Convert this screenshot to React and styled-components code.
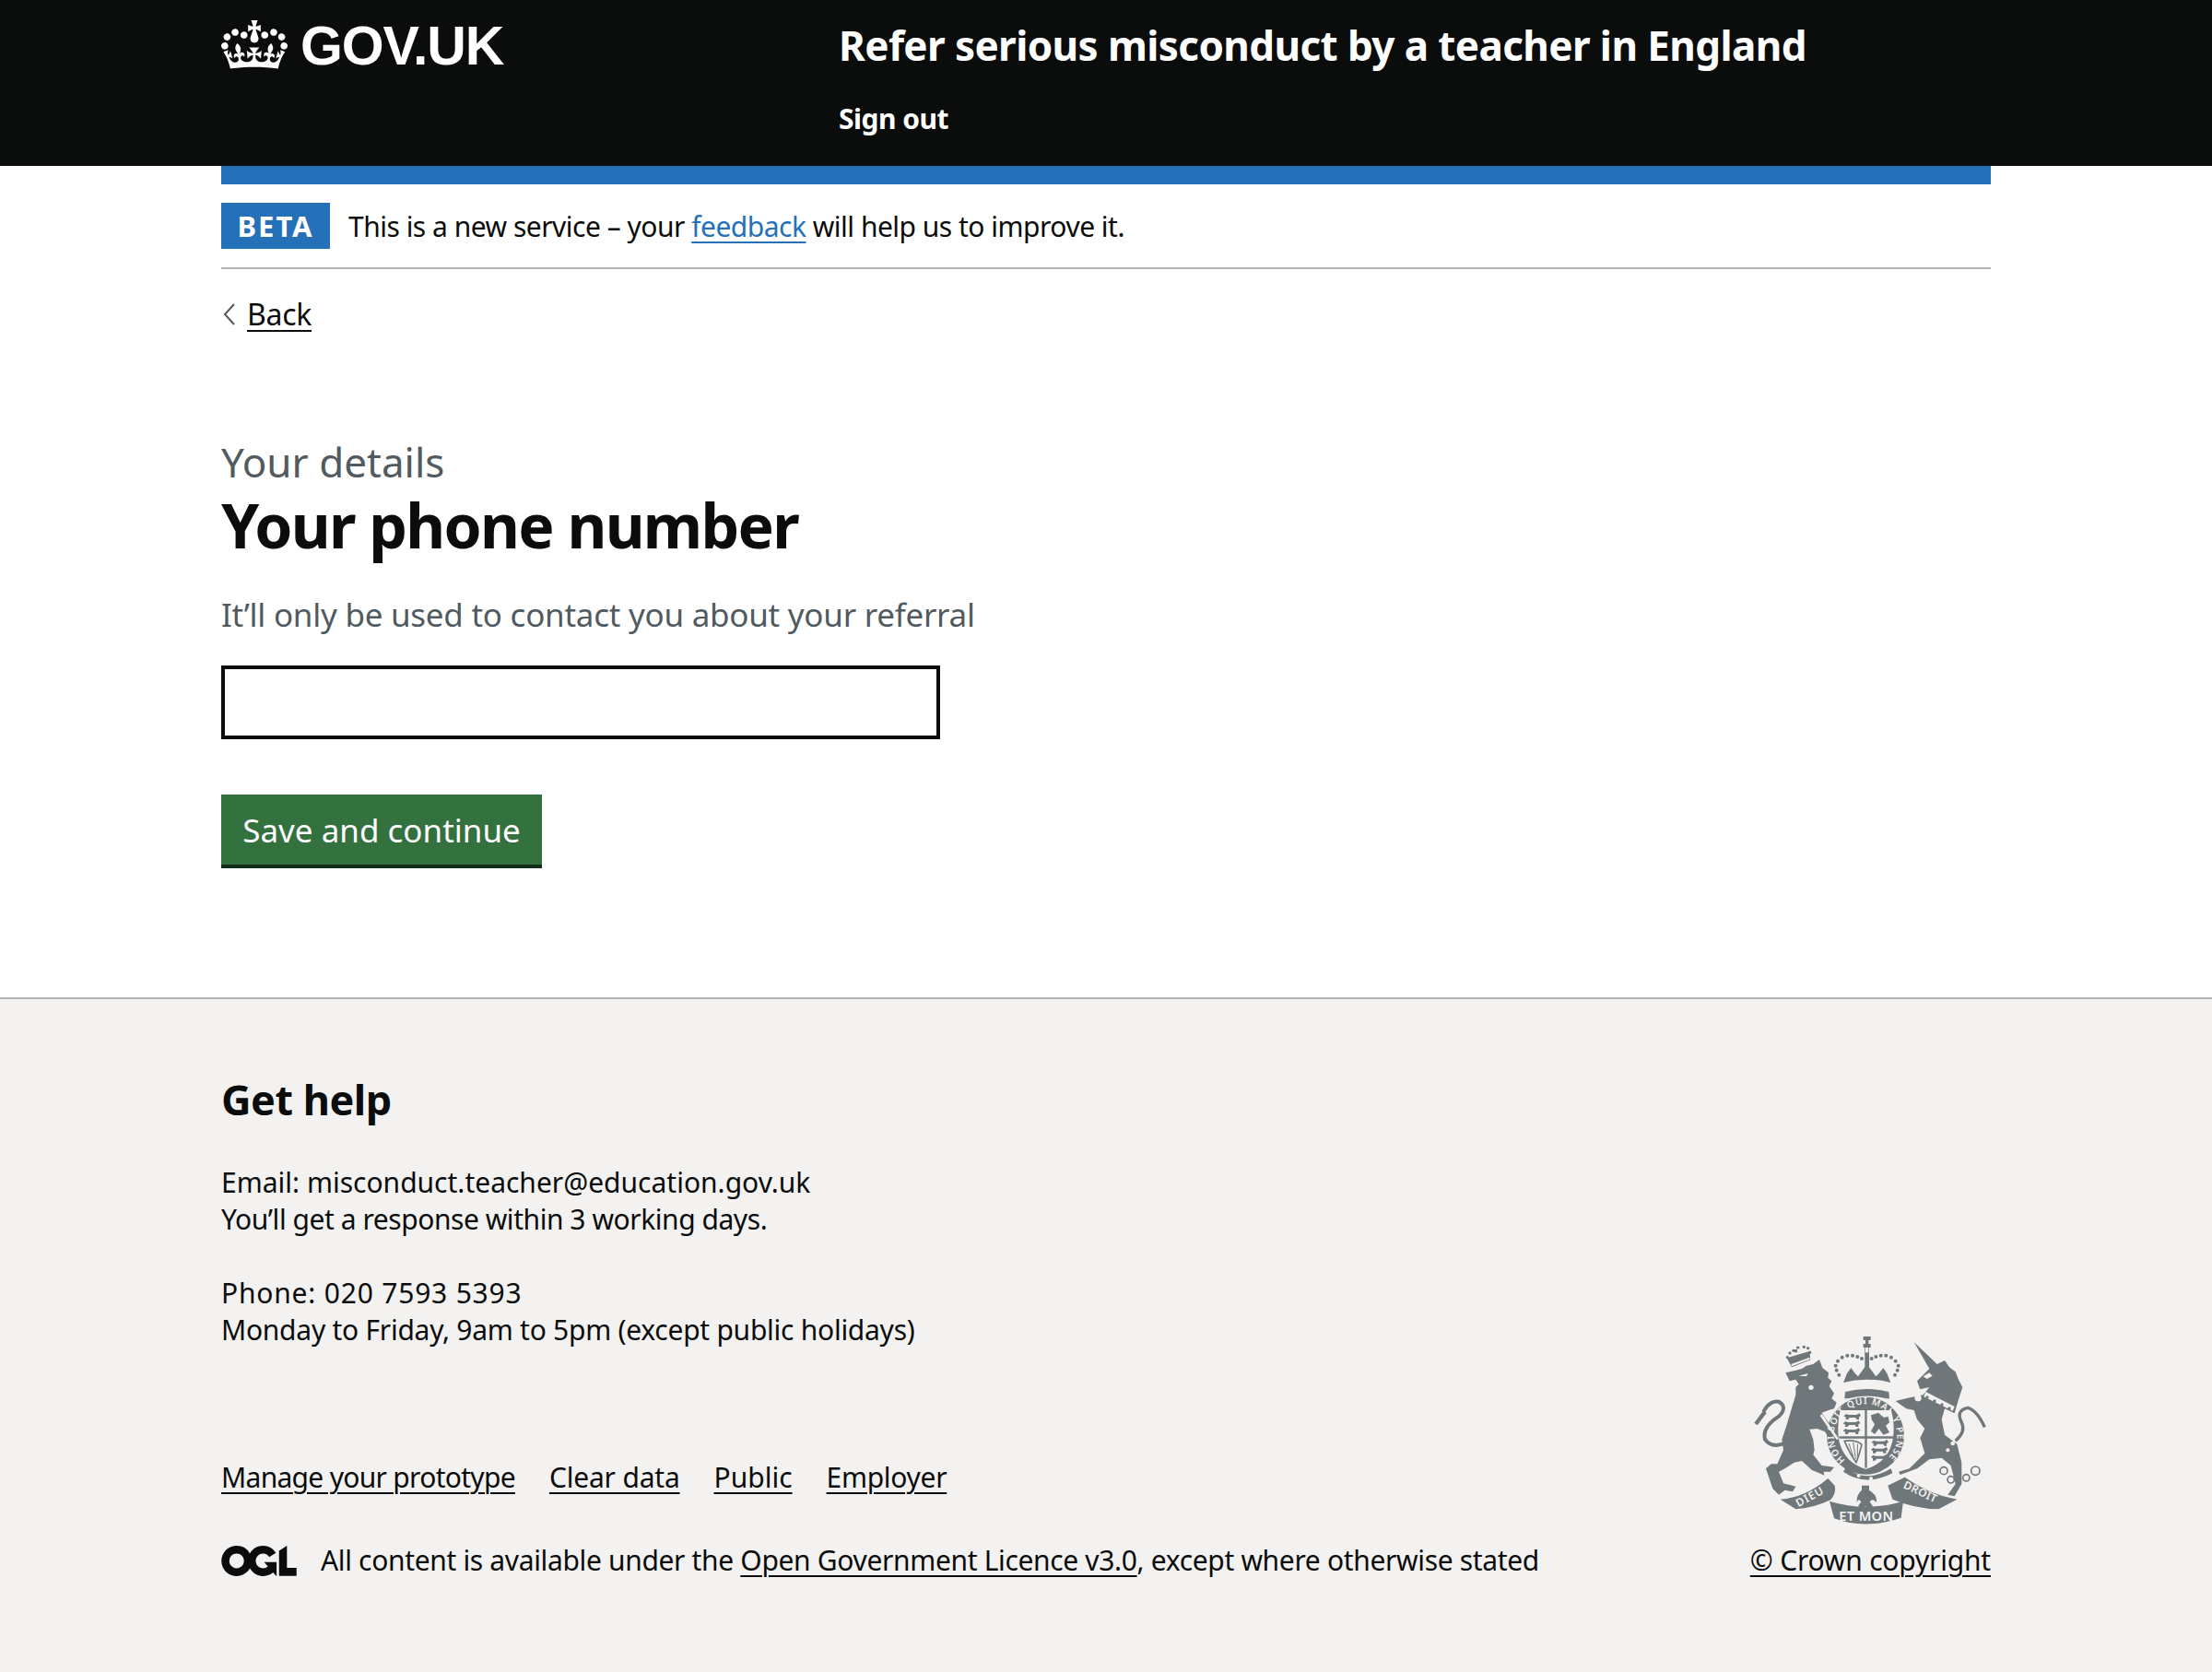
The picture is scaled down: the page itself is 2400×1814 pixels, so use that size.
import React from 'react';
import styled, { createGlobalStyle } from 'styled-components';

const FONT = '"Noto Sans", "Liberation Sans", Arial, sans-serif';
const INK = '#0b0c0c';
const GREY = '#505a5f';
const BLUE = '#2470b9';
const FOOTER_BG = '#f3f2f1';
const CREST = '#6f777b';

const GlobalStyle = createGlobalStyle`
  html, body {
    margin: 0;
    padding: 0;
    background: #fff;
    color: ${INK};
    font-family: ${FONT};
  }
`;

const Width = styled.div`
  width: 1920px;
  margin: 0 auto;
`;

const Header = styled.header`
  background: ${INK};
  height: 180px;
  color: #fff;
  overflow: hidden;
`;

const HeaderRow = styled(Width)`
  display: flex;
`;

const Logo = styled.a`
  width: 670px;
  height: 100px;
  display: flex;
  align-items: center;
  gap: 14px;
  color: #fff;
  font-family: "Liberation Sans", Arial, sans-serif;
  font-weight: 700;
  font-size: 59px;
  letter-spacing: -1.2px;
`;

const Crown = styled.svg`
  width: 72px;
  height: 53px;
  margin-bottom: 3px;
  fill: #fff;
`;

const ServiceName = styled.div`
  font-size: 44px;
  font-weight: 700;
  line-height: 98px;
  letter-spacing: -0.6px;
`;

const SignOut = styled.div`
  font-size: 30px;
  font-weight: 700;
  line-height: 62px;
  letter-spacing: -0.5px;
`;

const BlueBar = styled(Width)`
  height: 20px;
  background: ${BLUE};
`;

const PhaseBanner = styled(Width)`
  display: flex;
  align-items: center;
  gap: 20px;
  padding: 20px 0;
  border-bottom: 2px solid #b1b4b6;
  font-size: 30px;
  letter-spacing: -0.5px;
`;

const Tag = styled.strong`
  background: ${BLUE};
  color: #fff;
  height: 50px;
  width: 118px;
  display: flex;
  align-items: center;
  justify-content: center;
  font-size: 31px;
  font-weight: 700;
  letter-spacing: 2px;
`;

const Link = styled.a`
  color: ${(p) => p.$color || INK};
  letter-spacing: ${(p) => p.$spacing || 'inherit'};
  text-decoration: underline;
  text-decoration-thickness: 2px;
  text-underline-offset: 5px;
`;

const Main = styled(Width)`
  height: 790px;
  box-sizing: border-box;
  padding-top: 28px;
`;

const BackRow = styled.div`
  display: flex;
  align-items: center;
  gap: 12px;
  height: 40px;
  font-size: 32px;
  letter-spacing: -0.3px;
  margin-bottom: 111px;
`;

const Chevron = styled.svg`
  width: 14px;
  height: 24px;
  margin: 2px 0 0 2px;
`;

const Caption = styled.div`
  font-size: 44px;
  line-height: 60px;
  color: ${GREY};
`;

const Heading = styled.h1`
  margin: -2px 0 33px;
  font-size: 66px;
  line-height: 80px;
  font-weight: 700;
  letter-spacing: -1.7px;
`;

const Hint = styled.div`
  font-size: 35px;
  line-height: 50px;
  letter-spacing: -0.26px;
  color: ${GREY};
  margin-bottom: 30px;
`;

const Input = styled.input`
  display: block;
  width: 780px;
  height: 80px;
  box-sizing: border-box;
  border: 4px solid ${INK};
  border-radius: 0;
  background: #fff;
  margin-bottom: 60px;
`;

const Button = styled.button`
  display: block;
  width: 348px;
  height: 80px;
  box-sizing: border-box;
  padding: 0 0 4px;
  border: 0;
  border-radius: 0;
  background: #33713f;
  box-shadow: inset 0 -4px 0 #122d19;
  color: #fff;
  font-family: ${FONT};
  font-size: 35px;
`;

const Footer = styled.footer`
  background: ${FOOTER_BG};
  border-top: 2px solid #b1b4b6;
  height: 732px;
  box-sizing: border-box;
`;

const FooterInner = styled(Width)`
  display: flex;
  justify-content: space-between;
  align-items: flex-end;
  padding-top: 79px;
`;

const FooterMain = styled.div`
  font-size: 30px;
  line-height: 40px;
`;

const HelpTitle = styled.h2`
  margin: 0 0 40px;
  font-size: 45px;
  line-height: 60px;
  font-weight: 700;
  letter-spacing: -0.5px;
`;

const Para = styled.div`
  margin: 0 0 40px;
`;

const Line = styled.div`
  letter-spacing: ${(p) => p.$spacing || 'normal'};
`;

const MetaLinks = styled.div`
  display: flex;
  gap: 37px;
  margin-top: 120px;
`;

const LicenceRow = styled.div`
  display: flex;
  align-items: center;
  gap: 26px;
  margin-top: 50px;
  height: 40px;
  letter-spacing: -0.34px;
`;

const Ogl = styled.svg`
  width: 82px;
  height: 33px;
  fill: ${INK};
`;

const CrestColumn = styled.div`
  display: flex;
  flex-direction: column;
  align-items: flex-end;
  font-size: 30px;
  line-height: 40px;
`;

const CrestSvg = styled.svg`
  width: 300px;
  height: 240px;
  margin: 0 -20px 3px 0;
`;

const CrownIcon = () => (
  <Crown viewBox="0 0 132 97" aria-hidden="true">
    <path d="M25 30.2c3.5 1.5 7.7-.2 9.1-3.7 1.5-3.6-.2-7.8-3.9-9.2-3.6-1.4-7.6.3-9.1 3.9-1.4 3.5.3 7.5 3.9 9zM9 39.5c3.6 1.5 7.8-.2 9.2-3.7 1.5-3.6-.2-7.8-3.9-9.1-3.6-1.5-7.6.2-9.1 3.8-1.4 3.5.3 7.5 3.8 9zM4.4 57.2c3.5 1.5 7.7-.2 9.1-3.8 1.5-3.6-.2-7.7-3.9-9.1-3.5-1.5-7.6.3-9.1 3.8-1.4 3.5.3 7.6 3.9 9.1zm38.3-21.4c3.5 1.5 7.7-.2 9.1-3.8 1.5-3.6-.2-7.7-3.9-9.1-3.6-1.5-7.6.3-9.1 3.8-1.3 3.6.4 7.7 3.9 9.1zm64.4-5.6c-3.6 1.5-7.8-.2-9.1-3.7-1.5-3.6.2-7.8 3.8-9.2 3.6-1.4 7.7.3 9.2 3.9 1.3 3.5-.4 7.5-3.9 9zm15.9 9.3c-3.6 1.5-7.7-.2-9.1-3.7-1.5-3.6.2-7.8 3.7-9.1 3.6-1.5 7.7.2 9.2 3.8 1.5 3.5-.3 7.5-3.8 9zm4.7 17.7c-3.6 1.5-7.8-.2-9.2-3.8-1.5-3.6.2-7.7 3.9-9.1 3.6-1.5 7.7.3 9.2 3.8 1.3 3.5-.4 7.6-3.9 9.1zM89.3 35.8c-3.6 1.5-7.8-.2-9.2-3.8-1.4-3.6.2-7.7 3.9-9.1 3.6-1.5 7.7.3 9.2 3.8 1.4 3.6-.3 7.7-3.9 9.1zM69.7 17.7l8.9 4.7V9.3l-8.9 2.8c-.2-.3-.5-.6-.9-.9L72.4 0H59.6l3.6 11.2c-.3.3-.6.5-.9.9l-8.8-2.8v13.1l8.8-4.7c.3.3.6.7.9.9l-5 15.4v.1c-.2.8-.4 1.6-.4 2.4 0 4.1 3.1 7.5 7 8.1h.2c.3 0 .7.1 1 .1.4 0 .7 0 1-.1h.2c4-.6 7.1-4.1 7.1-8.1 0-.8-.1-1.7-.4-2.4V34l-5.1-15.4c.4-.2.7-.6 1-.9zM66 92.8c16.9 0 32.8 1.1 47.1 3.2 4-16.9 8.9-26.7 14-33.5l-9.6-3.4c1 4.9 1.1 7.2 0 10.2-1.5-1.4-3-4.3-4.2-8.7L108.6 76c2.8-2 5-3.2 7.5-3.3-4.4 9.4-10 11.9-13.6 11.2-4.3-.8-6.3-4.6-5.6-7.9 1-4.7 5.7-5.9 8-.5 4.3-8.7-3-11.4-7.6-8.8 7.1-7.2 7.9-13.5 2.1-21.1-8 6.1-8.1 12.3-4.5 20.8-4.7-5.4-12.1-2.5-9.5 6.2 3.4-5.2 7.9-2 7.2 3.1-.6 4.3-6.4 7.8-13.5 7.2-10.3-.9-10.9-8-11.2-13.8 2.5-.5 7.1 1.8 11 7.3L80.2 60c-4.1 4.4-8 5.3-12.3 5.4 1.4-4.4 8-11.6 8-11.6H55.5s6.4 7.2 7.9 11.6c-4.2-.1-8-1-12.3-5.4l1.4 16.4c3.9-5.5 8.5-7.7 10.9-7.3-.3 5.8-.9 12.8-11.1 13.8-7.2.6-12.9-2.9-13.5-7.2-.7-5 3.8-8.3 7.1-3.1 2.7-8.7-4.6-11.6-9.4-6.2 3.7-8.5 3.6-14.7-4.6-20.8-5.8 7.6-5 13.9 2.2 21.1-4.7-2.6-11.9.1-7.7 8.8 2.3-5.5 7.1-4.2 8.1.5.7 3.3-1.3 7.1-5.7 7.9-3.5.7-9-1.8-13.5-11.2 2.5.1 4.7 1.3 7.5 3.3l-4.7-15.4c-1.2 4.4-2.7 7.2-4.3 8.7-1.1-3-.9-5.3 0-10.2l-9.5 3.4c5 6.9 9.9 16.7 14 33.5 14.8-2.1 30.8-3.2 47.7-3.2z" />
  </Crown>
);

const OglLogo = () => (
  <Ogl viewBox="0 0 483.2 195.7" aria-hidden="true">
    <path d="M421.5 142.8V.1l-50.7 32.3v161.1h112.4v-50.7zm-122.3-9.6A47.12 47.12 0 0 1 221 97.8c0-26 21.1-47.1 47.1-47.1 16.7 0 31.4 8.7 39.7 21.8l42.7-27.2A97.63 97.63 0 0 0 268.1 0c-36.5 0-68.3 20.1-85.1 49.7A98 98 0 0 0 97.8 0C43.9 0 0 43.9 0 97.8s43.9 97.8 97.8 97.8c36.5 0 68.3-20.1 85.1-49.7a97.76 97.76 0 0 0 149.6 25.4l19.4 22.2h3v-87.8h-80l24.3 27.5zM97.8 145c-26 0-47.1-21.1-47.1-47.1s21.1-47.1 47.1-47.1 47.2 21 47.2 47S123.8 145 97.8 145" />
  </Ogl>
);

// coordinates are the crest's pixels at 3x, so the drawing can be read against a zoom
const crownDots = [
  [338, 170], [335, 155], [342, 140], [356, 128], [373, 122], [390, 122], [406, 126], [420, 132],
  [452, 132], [466, 126], [482, 122], [499, 122], [516, 128], [530, 140], [539, 155], [536, 170], [528, 185], [346, 185],
];
const lionCrownDots = [[178, 128], [186, 114], [198, 106], [232, 94], [245, 98], [251, 112]];
const passant = [[0, 0], [-2, 24], [-2, 48]];
const chainLinks = [[687, 497, 12], [710, 526, 11], [760, 520, 11], [790, 497, 14]];

const Passant = ({ x, y }) => (
  <g transform={`translate(${x} ${y})`}>
    {passant.map(([dx, dy]) => (
      <path key={dy} transform={`translate(${dx} ${dy})`} d="M0 6 l8 -6 l6 3 h26 l10 -5 l5 8 l-6 4 v8 h-8 l-3 -6 h-20 l-4 6 h-8 v-8 l-6 -2 z" />
    ))}
  </g>
);

const Crest = () => (
  <CrestSvg viewBox="0 0 900 720" role="img" aria-label="Royal coat of arms">
    <defs>
      <path id="garter" d="M366 462 A103 103 0 1 1 498 462" />
    </defs>
    <g fill={CREST}>
      {/* lion */}
      <path d="M172 178 L205 170 L225 165 L240 155 L262 150 L282 135 L292 162 L312 178 L310 195 L322 205 L314 222 L330 245 L322 262 L338 275 L330 295 L312 300 L290 308 L300 325 L320 350 L345 395 L335 410 L320 400 L300 370 L275 360 L250 362 L262 395 L266 430 L262 445 L290 480 L330 485 L318 500 L296 500 L298 512 L282 505 L258 495 L225 465 L200 470 L170 490 L150 500 L165 538 L205 548 L195 565 L170 560 L150 575 L130 555 L108 490 L125 475 L145 475 L165 430 L160 395 L175 350 L190 300 L205 250 L205 225 L215 215 L205 200 L185 205 Z" />
      <path d="M176 130 L250 108 L253 136 L192 160 Z" />
      <path d="M200 102 h8 l-1 -10 h10 v8 h-8 l2 12 h-10 z" />
      {/* unicorn */}
      <path d="M590 78 L665 150 L690 138 L705 160 L725 175 L735 200 L748 225 L735 265 L722 310 L690 295 L680 330 L690 380 L730 410 L745 470 L745 540 L722 580 L700 575 L725 540 L710 480 L680 455 L640 460 L600 490 L545 510 L540 500 L575 490 L625 440 L610 390 L625 360 L600 330 L590 300 L565 295 L530 270 L570 260 L620 250 L640 225 L610 232 L600 205 L640 165 Z" />
      {/* royal crown */}
      <path d="M360 210 L372 180 L385 162 L398 180 L408 190 L437 150 L466 190 L476 180 L490 162 L502 180 L514 210 Q437 190 360 210 Z" />
      <path d="M425 60 H449 V72 H442 V84 H449 V96 H425 V84 H432 V72 H425 Z" />
      <path d="M430 96 H444 V165 H430 Z" />
      <path d="M366 240 Q437 222 508 240 L510 262 L498 262 Q437 245 376 262 L364 262 Z" />
      {crownDots.map(([x, y]) => (
        <circle key={`${x}-${y}`} cx={x} cy={y} r="6" />
      ))}
      {lionCrownDots.map(([x, y]) => (
        <circle key={`${x}-${y}`} cx={x} cy={y} r="5" />
      ))}
      {/* garter ring and buckle */}
      <circle cx="432" cy="383" r="126" />
      <path d="M368 485 Q432 540 515 490 L520 505 Q432 550 360 500 Z" />
      {/* scrolls */}
      <path d="M155 590 Q235 585 310 522 L332 545 Q338 570 318 592 Q260 620 205 622 Z" />
      <path d="M315 596 Q432 632 555 596 L548 650 Q432 690 330 652 Z" />
      <path d="M505 545 L560 518 Q640 575 730 590 L670 622 Q590 620 520 590 Z" />
      {/* fleur-de-lis */}
      <path d="M420 545 H444 V560 Q470 575 468 600 Q455 585 446 598 L456 612 L440 622 L432 612 L424 622 L408 612 L418 598 Q409 585 404 600 Q402 575 420 560 Z" />
    </g>
    <g fill="none" stroke={CREST}>
      <path strokeWidth="12" d="M185 400 Q130 430 105 395 Q95 355 150 320 Q180 290 150 272 Q120 268 100 305" />
      <path strokeWidth="13" d="M105 305 L75 345" />
      <path strokeWidth="10" d="M725 400 Q760 370 745 340 Q725 300 765 292 Q795 300 820 355" />
      {chainLinks.map(([cx, cy, r]) => (
        <circle key={cx} cx={cx} cy={cy} r={r} strokeWidth="5" />
      ))}
    </g>
    <g fill={FOOTER_BG}>
      {/* shield */}
      <path d="M350 300 H516 Q530 350 520 400 Q505 470 433 492 Q362 470 346 400 Q338 350 350 300 Z" />
      {/* gaps in the beasts */}
      <circle cx="716" cy="408" r="7" />
      <circle cx="700" cy="430" r="6" />
      <circle cx="725" cy="370" r="9" />
      <circle cx="255" cy="226" r="8" />
      <path d="M215 188 L245 180 L240 190 Z" />
      <path d="M290 312 L345 392 L338 396 L284 318 Z" />
      <path d="M628 240 L722 288 L716 302 L622 256 Z" />
      <path d="M620 190 L640 178 L650 188 L632 198 Z" />
      <circle cx="603" cy="260" r="11" />
      <circle cx="593" cy="345" r="11" />
      <circle cx="410" cy="513" r="6" />
      <circle cx="450" cy="522" r="6" />
      <path d="M190 150 L250 128 L251 134 L192 157 Z" />
      <path d="M432 96 H442 V112 H432 Z" />
    </g>
    <g fill={CREST}>
      <path d="M430 298 H437 V488 H430 Z" />
      <path d="M346 385 H522 V392 H346 Z" />
      <Passant x={362} y={312} />
      <Passant x={452} y={398} />
      {/* rampant lion of the second quarter */}
      <path d="M450 316 L474 308 L492 324 L506 320 L510 340 L498 350 L510 372 L490 380 L476 360 L462 378 L450 368 L462 346 L452 330 Z" />
      {[0, 1, 2, 3].map((i) => (
        <circle key={i} cx={633 + 24 * i} cy={258 + 12 * i} r="5" />
      ))}
    </g>
    {/* harp */}
    <g fill="none" stroke={CREST} strokeWidth="5">
      <path d="M364 400 Q400 395 420 412 Q412 445 402 470 Q380 440 364 400 Z" />
      <path d="M378 408 L392 450 M392 404 L400 458 M406 410 L406 452" strokeWidth="3" />
    </g>
    <g fill={FOOTER_BG} fontFamily="Noto Sans, sans-serif" fontWeight="600">
      <text fontSize="30" textLength="490" lengthAdjust="spacing">
        <textPath href="#garter">HONI SOIT QUI MAL Y PENSE</textPath>
      </text>
      <text fontSize="36" letterSpacing="3" transform="translate(214 616) rotate(-29)">DIEU</text>
      <text fontSize="44" letterSpacing="1" x="346" y="660">ET MON</text>
      <text fontSize="36" letterSpacing="1" transform="translate(553 552) rotate(25)">DROIT</text>
    </g>
  </CrestSvg>
);

export default function App() {
  return (
    <>
      <GlobalStyle />
      <Header>
        <HeaderRow>
          <Logo>
            <CrownIcon />
            GOV.UK
          </Logo>
          <div>
            <ServiceName>Refer serious misconduct by a teacher in England</ServiceName>
            <SignOut>Sign out</SignOut>
          </div>
        </HeaderRow>
      </Header>
      <BlueBar />
      <PhaseBanner>
        <Tag>BETA</Tag>
        <span>
          This is a new service – your <Link $color={BLUE} href="#">feedback</Link> will help us to improve it.
        </span>
      </PhaseBanner>
      <Main>
        <BackRow>
          <Chevron viewBox="0 0 14 24" aria-hidden="true">
            <path d="M12 1 L2 12 L12 23" fill="none" stroke={GREY} strokeWidth="2" />
          </Chevron>
          <Link href="#">Back</Link>
        </BackRow>
        <Caption>Your details</Caption>
        <Heading>Your phone number</Heading>
        <Hint>It’ll only be used to contact you about your referral</Hint>
        <Input type="text" />
        <Button>Save and continue</Button>
      </Main>
      <Footer>
        <FooterInner>
          <FooterMain>
            <HelpTitle>Get help</HelpTitle>
            <Para>
              <Line>Email: misconduct.teacher@education.gov.uk</Line>
              <Line $spacing="-0.45px">You’ll get a response within 3 working days.</Line>
            </Para>
            <Para>
              <Line $spacing="0.8px">Phone: 020 7593 5393</Line>
              <Line $spacing="-0.26px">Monday to Friday, 9am to 5pm (except public holidays)</Line>
            </Para>
            <MetaLinks>
              <Link $spacing="-0.7px" href="#">Manage your prototype</Link>
              <Link $spacing="-0.2px" href="#">Clear data</Link>
              <Link href="#">Public</Link>
              <Link $spacing="-0.3px" href="#">Employer</Link>
            </MetaLinks>
            <LicenceRow>
              <OglLogo />
              <span>
                All content is available under the <Link href="#">Open Government Licence v3.0</Link>, except where otherwise stated
              </span>
            </LicenceRow>
          </FooterMain>
          <CrestColumn>
            <Crest />
            <Link $spacing="-0.2px" href="#">© Crown copyright</Link>
          </CrestColumn>
        </FooterInner>
      </Footer>
    </>
  );
}
